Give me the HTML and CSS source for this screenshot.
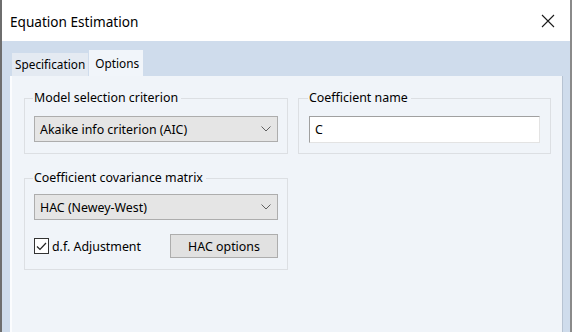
FILE: index.html
```html
<!DOCTYPE html>
<html lang="en">

<head>
    <meta charset="UTF-8">
    <title>Equation Estimation</title>
    <link rel="stylesheet" href="styles.css">
</head>

<body>
    <div class="window">
        <div class="titlebar">
            <span class="title">Equation Estimation</span>
            <svg class="close" width="14" height="14" viewBox="0 0 14 14">
                <path d="M1 1 L13 13 M13 1 L1 13" stroke="#1a1a1a" stroke-width="1.1" fill="none" />
            </svg>
        </div>

        <div class="client">
            <div class="tabs">
                <div class="tab">Specification</div>
                <div class="tab active">Options</div>
            </div>

            <div class="panel">
                <div class="row">
                    <fieldset class="group group-model">
                        <legend>Model selection criterion</legend>
                        <div class="combo">
                            <span>Akaike info criterion (AIC)</span>
                            <svg class="chevron" width="10" height="6" viewBox="0 0 10 6">
                                <path d="M0.5 0.5 L5 5 L9.5 0.5" stroke="#606060" stroke-width="1" fill="none" />
                            </svg>
                        </div>
                    </fieldset>

                    <fieldset class="group group-name">
                        <legend>Coefficient name</legend>
                        <input type="text" class="edit" value="C">
                    </fieldset>
                </div>

                <fieldset class="group group-cov">
                    <legend>Coefficient covariance matrix</legend>
                    <div class="combo">
                        <span>HAC (Newey-West)</span>
                        <svg class="chevron" width="10" height="6" viewBox="0 0 10 6">
                            <path d="M0.5 0.5 L5 5 L9.5 0.5" stroke="#606060" stroke-width="1" fill="none" />
                        </svg>
                    </div>
                    <div class="options-row">
                        <label class="check">
                            <span class="box">
                                <svg width="13" height="13" viewBox="0 0 13 13">
                                    <path d="M2 6.5 L5 9.5 L11 3" stroke="#222" stroke-width="1.2" fill="none" />
                                </svg>
                            </span>
                            d.f. Adjustment
                        </label>
                        <button class="btn">HAC options</button>
                    </div>
                </fieldset>
            </div>
        </div>
    </div>
</body>

</html>
```

FILE: styles.css
```css
body {
    margin: 0;
    padding: 0;
    font-family: 'Noto Sans', 'Open Sans', sans-serif;
    font-size: 12.4px;
    color: #000;
}

.window {
    width: 572px;
    height: 332px;
    box-sizing: border-box;
    border-left: 2px solid #6e6e6e;
    border-right: 2px solid #8a8a8a;
    display: flex;
    flex-direction: column;
    overflow: hidden;
}

.titlebar {
    height: 41px;
    flex-shrink: 0;
    background-color: #fff;
    display: flex;
    align-items: center;
    justify-content: space-between;
    padding: 1px 15px 0 8px;
    box-sizing: border-box;
}

.title {
    font-size: 13.6px;
}

.client {
    flex: 1;
    background-color: #cfdcec;
    display: flex;
    flex-direction: column;
    padding: 9px 7px 0 8px;
}

.tabs {
    display: flex;
    align-items: flex-end;
    height: 26px;
    padding-left: 2px;
    font-size: 11.8px;
}

.tab {
    height: 23px;
    line-height: 23px;
    padding: 0 3px;
    background-color: #e4eaf2;
    box-sizing: border-box;
}

.tab.active {
    height: 26px;
    line-height: 26px;
    padding: 0 4px 0 6px;
    background-color: #f1f5fa;
    margin-left: 1px;
}

.panel {
    flex: 1;
    background-color: #f0f4f9;
    border-left: 2px solid #fbfcfe;
    border-right: 1px solid #b7c3d2;
    padding: 14px 9px 0 12px;
}

.row {
    display: flex;
    gap: 10px;
}

.group {
    margin: 0;
    border: 1px solid #dcdfe3;
    padding: 10px 9px 10px 9px;
}

.group legend {
    padding: 0 3px 0 1px;
    margin-left: -1px;
    line-height: 16px;
}

.group-model {
    width: 264px;
    box-sizing: border-box;
}

.group-name {
    width: 253px;
    box-sizing: border-box;
    padding-left: 10px;
}

.group-cov {
    width: 264px;
    box-sizing: border-box;
    margin-top: 16px;
    padding-top: 8px;
    padding-bottom: 11px;
}

.combo {
    height: 26px;
    box-sizing: border-box;
    border: 1px solid #adadad;
    background-color: #e5e5e5;
    display: flex;
    align-items: center;
    justify-content: space-between;
    padding: 0 6px 0 5px;
}

.edit {
    display: block;
    width: 231px;
    height: 27px;
    box-sizing: border-box;
    margin: 0;
    border: 1px solid #e3e3e3;
    border-top-color: #a0a0a0;
    border-left-color: #a0a0a0;
    background-color: #fff;
    font-family: inherit;
    font-size: 12.4px;
    padding: 0 5px;
    outline: none;
}

.options-row {
    display: flex;
    align-items: center;
    justify-content: space-between;
    margin-top: 14px;
}

.check {
    display: flex;
    align-items: center;
    gap: 3px;
}

.box {
    width: 15px;
    height: 16px;
    box-sizing: border-box;
    border: 1px solid #333;
    background-color: #fff;
    display: flex;
    align-items: center;
    justify-content: center;
}

.btn {
    width: 108px;
    height: 24px;
    border: 1px solid #adadad;
    background-color: #e1e1e1;
    font-family: inherit;
    font-size: 12.4px;
    color: #000;
    padding: 0;
}
```
